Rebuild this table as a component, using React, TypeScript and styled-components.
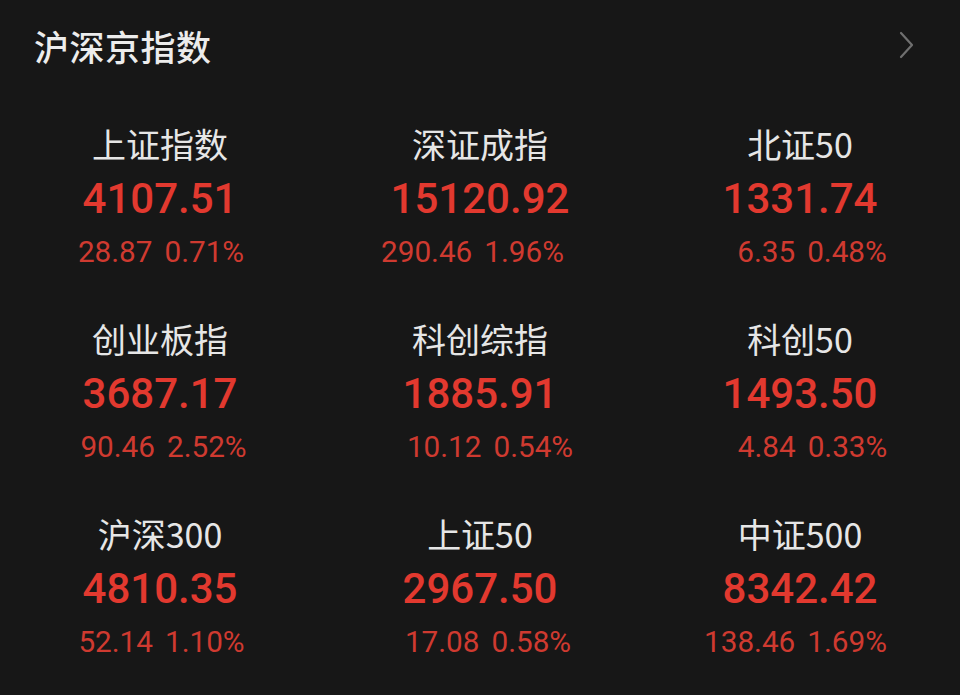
import React from "react";
import styled, { createGlobalStyle } from "styled-components";

const Global = createGlobalStyle`
  html, body { margin: 0; padding: 0; background: #171717; }
  body { font-family: Roboto, "Noto Sans CJK SC", sans-serif; }
`;

const Page = styled.div`
  width: 960px;
  height: 695px;
  background: #171717;
  overflow: hidden;
`;

const Header = styled.div`
  display: flex;
  align-items: center;
  justify-content: space-between;
  height: 90px;
  padding: 0 44px 0 34px;
  box-sizing: border-box;
`;

const Title = styled.h1`
  margin: 0;
  font-family: "Noto Sans CJK SC", sans-serif;
  font-size: 35px;
  font-weight: 500;
  color: #ececec;
  letter-spacing: 0.5px;
`;

const Grid = styled.div`
  display: grid;
  grid-template-columns: repeat(3, 320px);
  grid-auto-rows: 195px;
  padding-top: 29px;
`;

const Cell = styled.div`
  display: flex;
  flex-direction: column;
  align-items: center;
`;

const Label = styled.div`
  font-family: "Noto Sans CJK SC", sans-serif;
  font-size: 34px;
  line-height: 50px;
  color: #e6e6e6;
  font-weight: 400;
`;

const Value = styled.div`
  font-family: Roboto, sans-serif;
  font-size: 42px;
  line-height: 56px;
  font-weight: 500;
  color: #e2392f;
  margin-top: 2px;
`;

const Change = styled.div<{ $dx: number }>`
  display: flex;
  gap: 12px;
  font-family: Roboto, sans-serif;
  font-size: 29.7px;
  line-height: 50px;
  color: #cf3a30;
  margin-left: ${(p) => (p.$dx > 0 ? p.$dx * 2 : 0)}px;
  margin-right: ${(p) => (p.$dx < 0 ? -p.$dx * 2 : 0)}px;
`;

type Item = { name: string; value: string; diff: string; pct: string; dx: number };

const items: Item[] = [
  { name: "上证指数", value: "4107.51", diff: "28.87", pct: "0.71%", dx: 1 },
  { name: "深证成指", value: "15120.92", diff: "290.46", pct: "1.96%", dx: -7.5 },
  { name: "北证50", value: "1331.74", diff: "6.35", pct: "0.48%", dx: 12 },
  { name: "创业板指", value: "3687.17", diff: "90.46", pct: "2.52%", dx: 3.5 },
  { name: "科创综指", value: "1885.91", diff: "10.12", pct: "0.54%", dx: 10 },
  { name: "科创50", value: "1493.50", diff: "4.84", pct: "0.33%", dx: 12.5 },
  { name: "沪深300", value: "4810.35", diff: "52.14", pct: "1.10%", dx: 1.5 },
  { name: "上证50", value: "2967.50", diff: "17.08", pct: "0.58%", dx: 8 },
  { name: "中证500", value: "8342.42", diff: "138.46", pct: "1.69%", dx: -4.5 },
];

const Chevron = () => (
  <svg width="18" height="28" viewBox="0 0 18 28" fill="none">
    <path d="M3 2 L14 14 L3 26" stroke="#6f6f6f" strokeWidth="2.2" strokeLinecap="round" strokeLinejoin="round" />
  </svg>
);

export default function App() {
  return (
    <Page>
      <Global />
      <Header>
        <Title>沪深京指数</Title>
        <Chevron />
      </Header>
      <Grid>
        {items.map((it) => (
          <Cell key={it.name}>
            <Label>{it.name}</Label>
            <Value>{it.value}</Value>
            <Change $dx={it.dx}>
              <span>{it.diff}</span>
              <span>{it.pct}</span>
            </Change>
          </Cell>
        ))}
      </Grid>
    </Page>
  );
}
